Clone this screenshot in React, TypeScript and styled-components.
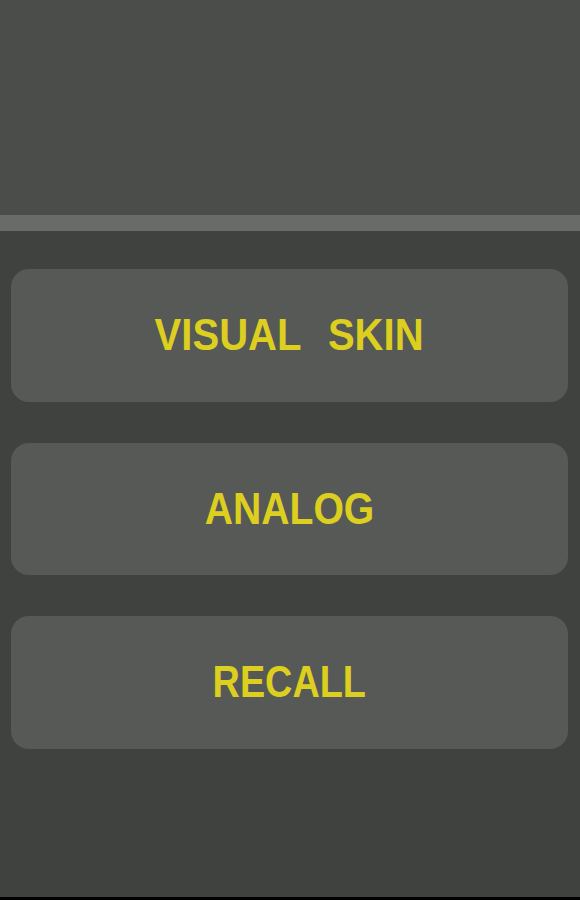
import React from 'react';
import styled, { createGlobalStyle } from 'styled-components';

const GlobalStyle = createGlobalStyle`
  html, body {
    margin: 0;
    padding: 0;
    background: #000;
  }
`;

const Screen = styled.div`
  width: 580px;
  height: 897px;
  display: flex;
  flex-direction: column;
  background: #404240;
  overflow: hidden;
`;

const Header = styled.div`
  height: 215px;
  background: #4b4d4b;
`;

const Divider = styled.div`
  height: 16px;
  background: #696b69;
`;

const Menu = styled.div`
  display: flex;
  flex-direction: column;
  gap: 41px;
  padding: 38px 12px 0 11px;
`;

const MenuButton = styled.button`
  height: 132.5px;
  display: flex;
  align-items: center;
  justify-content: center;
  border: none;
  border-radius: 18px;
  background: #575957;
  padding: 0;
`;

const Label = styled.span<{ $squeeze: number }>`
  display: inline-block;
  color: #dccf20;
  font-family: "Liberation Sans", Arial, sans-serif;
  font-size: 45px;
  font-weight: 700;
  white-space: nowrap;
  word-spacing: 18px;
  transform: scaleX(${(p) => p.$squeeze});
`;

const items = [
  { label: 'VISUAL SKIN', squeeze: 0.89 },
  { label: 'ANALOG', squeeze: 0.87 },
  { label: 'RECALL', squeeze: 0.84 },
];

export default function App() {
  return (
    <Screen>
      <GlobalStyle />
      <Header />
      <Divider />
      <Menu>
        {items.map((item) => (
          <MenuButton key={item.label}>
            <Label $squeeze={item.squeeze}>{item.label}</Label>
          </MenuButton>
        ))}
      </Menu>
    </Screen>
  );
}
